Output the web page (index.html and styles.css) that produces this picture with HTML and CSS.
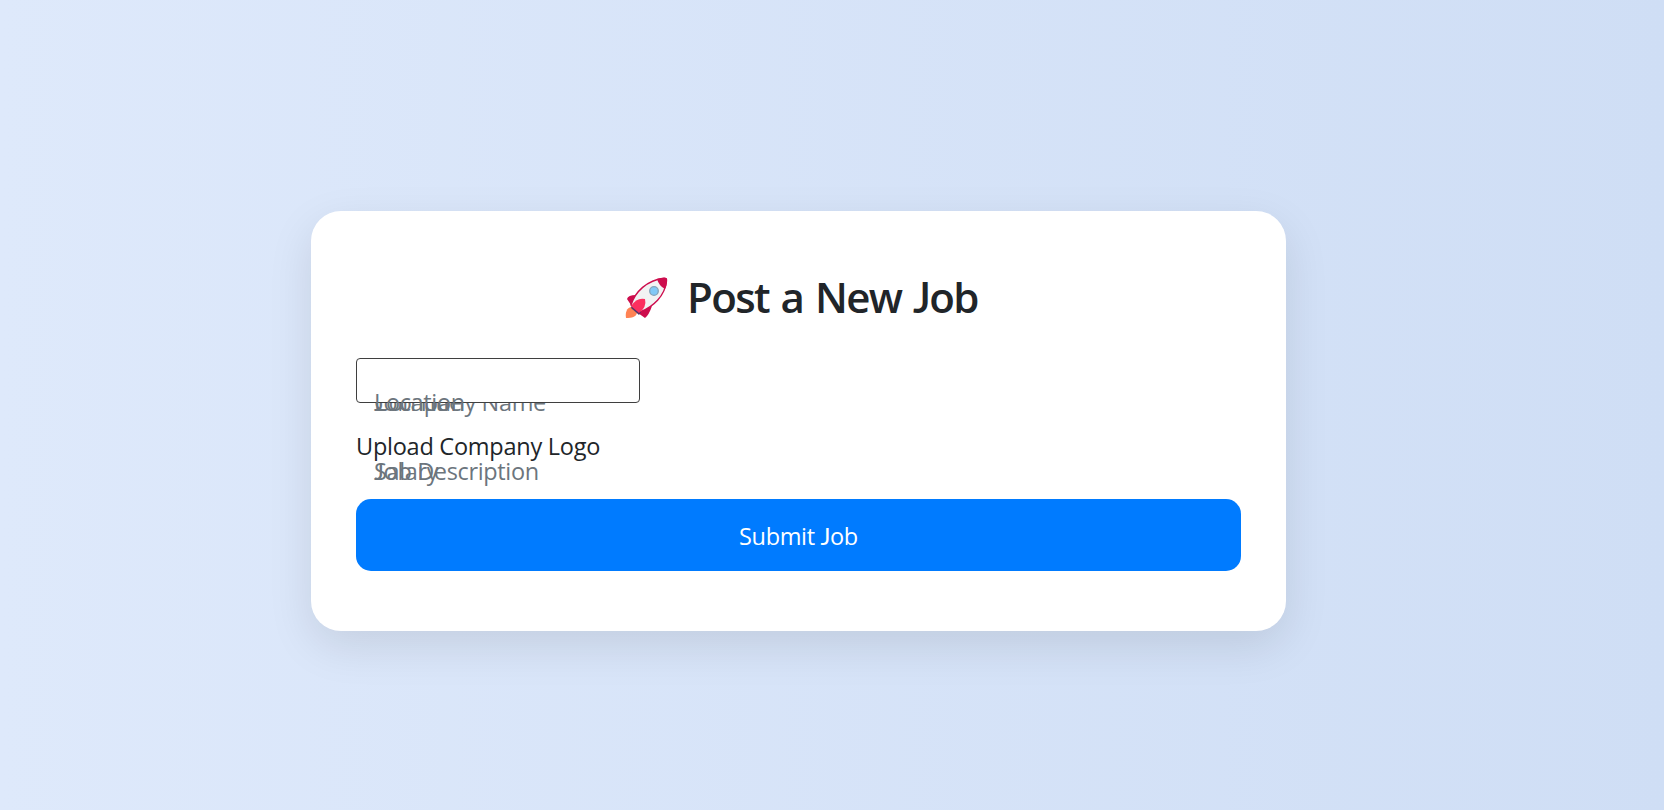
FILE: index.html
```html
<!DOCTYPE html>
<html lang="en">
<head>
<meta charset="utf-8">
<title>Post a New Job</title>
<link rel="stylesheet" href="styles.css">
</head>
<body>
<main class="card">
  <h1 class="title">
    <svg class="rocket" viewBox="0 0 42 42" aria-hidden="true">
      <path fill="#ff8354" d="M0 41c-1-6 1-10 5-11l6 6c-1 4-5 5-11 5z"/>
      <path fill="#cd0d4d" d="M10 18Q2 18 1 22l4 6zM26 29Q23 38 19 41l-7-5z"/>
      <path fill="#f2f2f3" stroke="#cd0d4d" stroke-width="1.4" d="M5 28C9 15 21 3 38 1.200Q41 1 40.500 4C39 19 27 30 14 35z"/>
      <path fill="#cd0d4d" d="M31 2Q42-1 41 3q0 6-2 9-6-3-8-10z"/>
      <path fill="#533566" d="M6 28l9 7-2 3-8-7z"/>
      <path fill="#fb2f5f" d="M5 29Q11 20 19 22q2 8-6 14z"/>
      <circle cx="28" cy="14" r="4.300" fill="#82c8f6" stroke="#83a2b9" stroke-width="1.300"/>
    </svg>
    <span class="title-text">Post a New <span class="cap-j">J</span>ob</span>
  </h1>
  <form class="form">
    <div class="field">
      <label class="label"><span class="cap-j">J</span>ob Title</label>
      <label class="label label-company">Company Name</label>
      <input class="input" type="text" aria-label="Location">
      <label class="label label-location">Location</label>
    </div>
    <div class="upload"><span class="upload-text">Upload Company Logo</span></div>
    <div class="extra">
      <label class="label label-salary">Salary</label>
      <label class="label label-description"><span class="cap-j">J</span>ob Description</label>
    </div>
    <button class="submit" type="button">Submit <span class="cap-j">J</span>ob</button>
  </form>
</main>
</body>
</html>
```
FILE: styles.css
```css
* { box-sizing: border-box; }

body {
  margin: 0;
  height: 810px;
  overflow: hidden;
  padding: 211px 378px 0 311px;
  background: linear-gradient(to right, #dee9fb, #cfdef5);
  color: #212529;
  font: 23.5px/36px "Open Sans", "Noto Sans", sans-serif;
  letter-spacing: -0.25px;
}

.card {
  height: 420px;
  padding: 60px 45px;
  background: #fff;
  border-radius: 30px;
  box-shadow: 0 15px 45px rgba(0, 0, 0, 0.1);
}

.title {
  display: flex;
  gap: 19px;
  height: 51px;
  margin: 0 0 36px;
  padding-left: 270px;
  font-size: 42px;
  font-weight: 600;
  line-height: 51px;
  white-space: nowrap;
}

.rocket {
  width: 42px;
  height: 42px;
  margin-top: 6px;
  overflow: visible;
}

.title-text {
  letter-spacing: -1.6px;
  word-spacing: 2.2px;
}

/* A capital J that sits on the baseline */
.cap-j {
  font-family: Lato, sans-serif;
  line-height: 1;
}

.field {
  position: relative;
  height: 45px;
}

.input {
  position: relative;
  display: block;
  width: 284px;
  height: 45px;
  border: 1px solid #3f3f3f;
  border-radius: 4px;
  background: #fff;
}

.label {
  position: absolute;
  top: 26px;
  left: 18px;
  color: #6c757d;
  letter-spacing: -0.35px;
  white-space: nowrap;
}

.upload {
  margin-top: 25px;
}

.extra {
  position: relative;
  height: 35px;
}

.extra .label { top: -11px; }

.submit {
  display: block;
  width: 100%;
  height: 72px;
  padding: 1px 0 0;
  border: 0;
  border-radius: 15px;
  background: #007bff;
  color: #fff;
  font: inherit;
  letter-spacing: -0.35px;
}
```
